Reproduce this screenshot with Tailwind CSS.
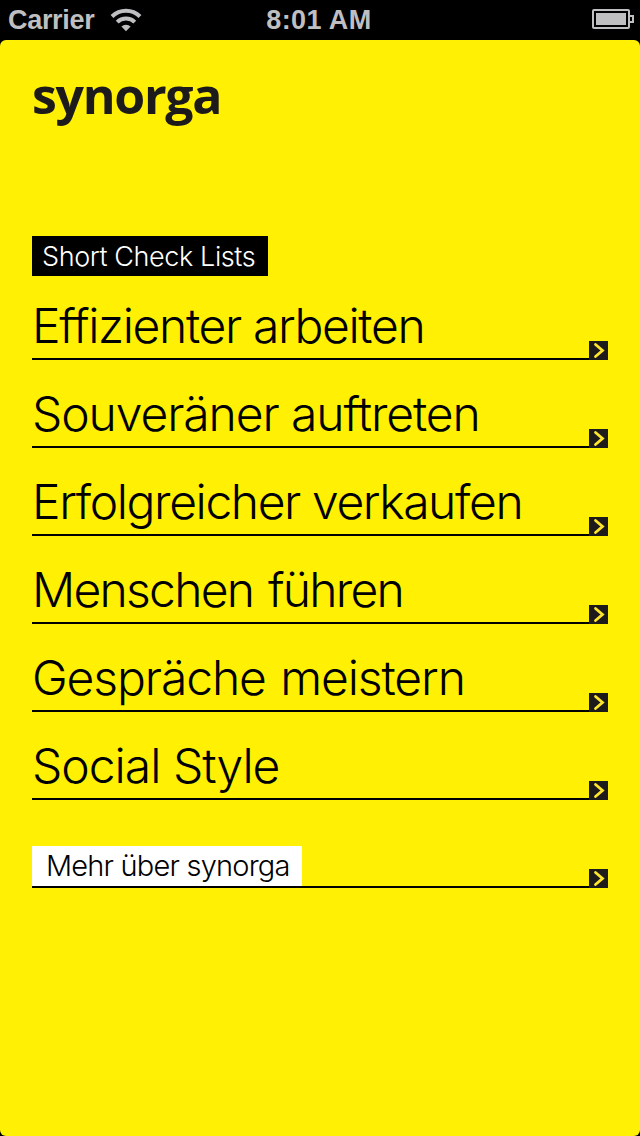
<!DOCTYPE html>
<html lang="de">

<head>
    <meta charset="UTF-8">
    <meta name="viewport" content="width=device-width, initial-scale=1.0">
    <title>synorga</title>
    <script src="https://cdn.jsdelivr.net/npm/@tailwindcss/browser@4"></script>
</head>

<body class="bg-black h-[1136px] flex flex-col overflow-hidden font-['Inter','Liberation_Sans',sans-serif]">

    <!-- Status bar -->
    <header class="h-10 shrink-0 grid grid-cols-3 items-center pl-2 pr-1.5 text-[#bfbfc1] font-['Liberation_Sans',sans-serif] font-bold text-[27px] leading-10">
        <div class="flex items-center gap-4">
            <span class="tracking-[-0.3px]">Carrier</span>
            <svg class="w-8 h-6" viewBox="0 0 32 24" fill="none" stroke="currentColor" stroke-width="4">
                <path d="M2 8.5a20 20 0 0 1 28 0" />
                <path d="M7.2 14.2a12.5 12.5 0 0 1 17.6 0" />
                <path d="M16 23.2l-4.6-4.6a6.6 6.6 0 0 1 9.2 0z" fill="currentColor" stroke="none" />
            </svg>
        </div>
        <span class="text-center pr-1 tracking-[0.4px]">8:01 AM</span>
        <svg class="w-[42px] h-5 justify-self-end -mt-0.5" viewBox="0 0 42 20" fill="none" stroke="currentColor" stroke-width="2">
            <rect x="1" y="1" width="36" height="18" rx="1" />
            <rect x="4" y="4" width="30" height="12" fill="currentColor" stroke="none" />
            <path d="M38 7h3v6h-3" />
        </svg>
    </header>

    <main class="grow bg-[#fff004] rounded-[6px] px-8 pt-[25px] text-black">
        <h1 class="h-[60px] leading-[60px] text-[50px] font-bold tracking-[-1.3px] text-[#1d1a1b] font-['Open_Sans',sans-serif]">synorga</h1>

        <h2 class="mt-[111px] w-[236px] h-10 pl-2.5 bg-black text-white font-light text-[27px] leading-[41px] whitespace-nowrap tracking-[-0.4px]">Short Check Lists</h2>

        <nav class="font-light text-[48px] whitespace-nowrap">
            <a href="#" class="mt-1 h-20 border-b-2 border-black flex items-end justify-between">
                <span class="leading-[65px] tracking-[-1.35px]">Effizienter arbeiten</span>
                <svg class="w-[19px] h-[19px] -mb-0.5" viewBox="0 0 19 19" fill="none"><path d="M0 0h19v19H0z" fill="#1d1a1b" /><path d="M6.5 3.5l7 6-7 6" stroke="#ffe52b" stroke-width="2.8" stroke-linecap="round" /></svg>
            </a>
            <a href="#" class="h-[88px] border-b-2 border-black flex items-end justify-between">
                <span class="leading-[65px] tracking-[-1.1px]">Souveräner auftreten</span>
                <svg class="w-[19px] h-[19px] -mb-0.5" viewBox="0 0 19 19" fill="none"><path d="M0 0h19v19H0z" fill="#1d1a1b" /><path d="M6.5 3.5l7 6-7 6" stroke="#ffe52b" stroke-width="2.8" stroke-linecap="round" /></svg>
            </a>
            <a href="#" class="h-[88px] border-b-2 border-black flex items-end justify-between">
                <span class="leading-[65px] tracking-[-1.4px]">Erfolgreicher verkaufen</span>
                <svg class="w-[19px] h-[19px] -mb-0.5" viewBox="0 0 19 19" fill="none"><path d="M0 0h19v19H0z" fill="#1d1a1b" /><path d="M6.5 3.5l7 6-7 6" stroke="#ffe52b" stroke-width="2.8" stroke-linecap="round" /></svg>
            </a>
            <a href="#" class="h-[88px] border-b-2 border-black flex items-end justify-between">
                <span class="leading-[65px] tracking-[-1.75px] [word-spacing:3px]">Menschen führen</span>
                <svg class="w-[19px] h-[19px] -mb-0.5" viewBox="0 0 19 19" fill="none"><path d="M0 0h19v19H0z" fill="#1d1a1b" /><path d="M6.5 3.5l7 6-7 6" stroke="#ffe52b" stroke-width="2.8" stroke-linecap="round" /></svg>
            </a>
            <a href="#" class="h-[88px] border-b-2 border-black flex items-end justify-between">
                <span class="leading-[65px] tracking-[-1.1px] [word-spacing:2px]">Gespräche meistern</span>
                <svg class="w-[19px] h-[19px] -mb-0.5" viewBox="0 0 19 19" fill="none"><path d="M0 0h19v19H0z" fill="#1d1a1b" /><path d="M6.5 3.5l7 6-7 6" stroke="#ffe52b" stroke-width="2.8" stroke-linecap="round" /></svg>
            </a>
            <a href="#" class="h-[88px] border-b-2 border-black flex items-end justify-between">
                <span class="leading-[65px] tracking-[-1px]">Social Style</span>
                <svg class="w-[19px] h-[19px] -mb-0.5" viewBox="0 0 19 19" fill="none"><path d="M0 0h19v19H0z" fill="#1d1a1b" /><path d="M6.5 3.5l7 6-7 6" stroke="#ffe52b" stroke-width="2.8" stroke-linecap="round" /></svg>
            </a>
            <a href="#" class="h-[88px] border-b-2 border-black flex items-end justify-between">
                <span class="w-[270px] h-10 pl-3.5 bg-white text-[29px] leading-10 tracking-[-0.8px]">Mehr über synorga</span>
                <svg class="w-[19px] h-[19px] -mb-0.5" viewBox="0 0 19 19" fill="none"><path d="M0 0h19v19H0z" fill="#1d1a1b" /><path d="M6.5 3.5l7 6-7 6" stroke="#ffe52b" stroke-width="2.8" stroke-linecap="round" /></svg>
            </a>
        </nav>
    </main>
</body>

</html>
